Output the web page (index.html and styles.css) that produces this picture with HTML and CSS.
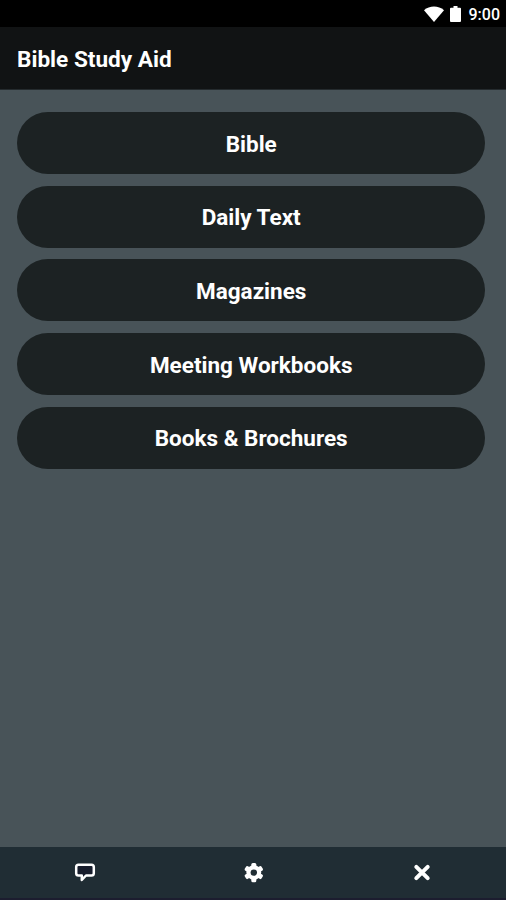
FILE: index.html
```html
<!DOCTYPE html>
<html lang="en">
<head>
<meta charset="utf-8">
<title>Bible Study Aid</title>
<link rel="stylesheet" href="styles.css">
</head>
<body>
<div class="screen">
  <div class="status">
    <svg class="wifi" width="20" height="16" viewBox="0 0 20 16"><path d="M0 4.200C5.500-.6 14.500-.6 20 4.200L10 16z" fill="#fff"/></svg>
    <svg class="battery" width="11" height="16" viewBox="0 0 11 16"><path d="M3.500 0h4v1.700H10q1 0 1 1V15q0 1-1 1H1q-1 0-1-1V2.700q0-1 1-1h2.500z" fill="#fff"/></svg>
    <span class="time">9:00</span>
  </div>
  <header class="header"><h1 class="title">Bible Study Aid</h1></header>
  <main class="menu">
    <button class="item">Bible</button>
    <button class="item">Daily Text</button>
    <button class="item">Magazines</button>
    <button class="item">Meeting Workbooks</button>
    <button class="item">Books &amp; Brochures</button>
  </main>
  <nav class="tabs">
    <button class="tab" aria-label="Feedback"><svg width="24" height="24" viewBox="0 0 24 24"><path d="M6.500 3.700h13q2.300 0 2.300 2.300v6.200q0 2.300-2.300 2.300H14L9.800 19V14.500H6.500q-2.300 0-2.300-2.300V6Q4.200 3.700 6.500 3.700z" fill="#171d2c" stroke="#fff" stroke-width="2.500" stroke-linejoin="round"/></svg></button>
    <button class="tab" aria-label="Settings"><svg width="24" height="24" viewBox="0 0 24 24"><g transform="translate(.8 -.4)"><g fill="#fff"><circle cx="12" cy="12" r="7.400"/><rect id="tooth" x="9.500" y="2.300" width="5" height="19.400" rx="1.500"/><use href="#tooth" transform="rotate(60 12 12)"/><use href="#tooth" transform="rotate(120 12 12)"/></g><circle cx="12" cy="12" r="3.200" fill="#202d34"/></g></svg></button>
    <button class="tab" aria-label="Close"><svg width="24" height="24" viewBox="0 0 24 24"><path d="M6.300 5.800l11.400 11.400M17.700 5.800L6.300 17.200" stroke="#fff" stroke-width="4" stroke-linecap="round"/></svg></button>
  </nav>
</div>
</body>
</html>
```

FILE: styles.css
```css
* { box-sizing: border-box; }
body { margin: 0; font-family: Roboto, sans-serif; color: #fff; }
button { border: 0; padding: 0; color: inherit; font: inherit; }
.screen { height: 900px; display: flex; flex-direction: column; background: #485358; overflow: hidden; }
.status { height: 27px; display: flex; align-items: center; justify-content: flex-end; padding: 0 6px 0 0; background: #000; }
.battery { margin: 0 8px 0 6px; }
.time { font-size: 16px; font-weight: 500; line-height: 20px; padding-top: 2px; }
.header { height: 63px; display: flex; align-items: center; padding: 4px 17px 0; background: #111314; border-bottom: 1px solid #252b2e; }
.title { margin: 0; font-size: 22.600px; line-height: 28px; font-weight: 700; }
.menu { flex: 1; display: flex; flex-direction: column; gap: 11.600px; padding: 22.300px 21px 0 17.400px; }
.item { height: 62px; border-radius: 31px; background: #1c2223; font-size: 22.500px; line-height: 28px; font-weight: 700; padding-top: 1px; }
.tabs { height: 53px; display: grid; grid-template-columns: repeat(3, 1fr); background: #202d34; border-bottom: 2px solid #1c1d2f; }
.tab { display: flex; align-items: center; justify-content: center; background: transparent; }
```
